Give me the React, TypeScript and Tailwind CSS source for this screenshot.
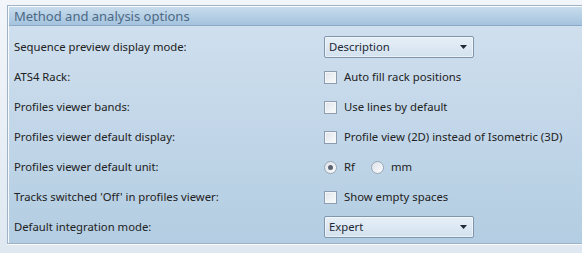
import React from 'react';

const font = { fontFamily: '"Noto Sans", "Open Sans", sans-serif' };

function Dropdown({ value }: { value: string }) {
  return (
    <div className="flex h-[22px] w-[150px] items-center justify-between rounded-[2px] border border-[#8096ad] bg-gradient-to-b from-[#e6eff7] to-[#d3e2ef] pl-[4px] pr-[6px] shadow-[inset_0_0_0_1px_rgba(255,255,255,0.5)]">
      <span className="text-[11.3px] leading-none text-[#1e2a36]">{value}</span>
      <svg width="7" height="4" viewBox="0 0 7 4">
        <path d="M0 0h7L3.5 4z" fill="#1f2a36" />
      </svg>
    </div>
  );
}

function Check({ label }: { label: string }) {
  return (
    <div className="flex items-center gap-[7px]">
      <span className="h-[13px] w-[13px] border border-[#8d9cae] bg-gradient-to-br from-[#dfe4ea] to-[#fbfcfd] shadow-[inset_0_0_0_1px_#f4f6f8]" />
      <span className="text-[11.3px] text-[#222]">{label}</span>
    </div>
  );
}

function Radio({ label, checked }: { label: string; checked?: boolean }) {
  return (
    <div className="flex items-center gap-[7px]">
      <span className="flex h-[13px] w-[13px] items-center justify-center rounded-full border border-[#9aa7b5] bg-gradient-to-br from-[#dde2e8] to-[#fbfcfd]">
        {checked && <span className="h-[5px] w-[5px] rounded-full bg-[#5b6470]" />}
      </span>
      <span className="text-[11.3px] text-[#222]">{label}</span>
    </div>
  );
}

const rows: { label: string; control: React.ReactNode }[] = [
  { label: 'Sequence preview display mode:', control: <Dropdown value="Description" /> },
  { label: 'ATS4 Rack:', control: <Check label="Auto fill rack positions" /> },
  { label: 'Profiles viewer bands:', control: <Check label="Use lines by default" /> },
  { label: 'Profiles viewer default display:', control: <Check label="Profile view (2D) instead of Isometric (3D)" /> },
  {
    label: 'Profiles viewer default unit:',
    control: (
      <div className="flex items-center gap-[16px]">
        <Radio label="Rf" checked />
        <Radio label="mm" />
      </div>
    ),
  },
  { label: "Tracks switched 'Off' in profiles viewer:", control: <Check label="Show empty spaces" /> },
  { label: 'Default integration mode:', control: <Dropdown value="Expert" /> },
];

export default function App() {
  return (
    <div className="h-[253px] w-[582px] overflow-hidden bg-gradient-to-b from-[#f2f6fa] to-[#dfe8f1] pl-[7px] pt-[5px]" style={font}>
      <div className="border border-r-0 border-[#9fb2c6]">
        <div className="border-l border-t border-white/70">
          <div className="flex h-[19px] items-center border-b border-[#8ca9c5] bg-gradient-to-b from-[#c8dcec] to-[#a4c3de] pl-[5px]">
            <span className="text-[13px] leading-none text-[#4d6985]">Method and analysis options</span>
          </div>
          <div className="flex h-[217px] flex-col gap-[8px] bg-gradient-to-b from-[#cfdfee] to-[#b3cde2] pl-[5px] pt-[10px]">
            {rows.map((r) => (
              <div key={r.label} className="grid h-[22px] grid-cols-[310px_1fr] items-center">
                <span className="text-[11.3px] text-[#222]">{r.label}</span>
                {r.control}
              </div>
            ))}
          </div>
        </div>
      </div>
      <div className="h-px w-full bg-white/80" />
    </div>
  );
}
